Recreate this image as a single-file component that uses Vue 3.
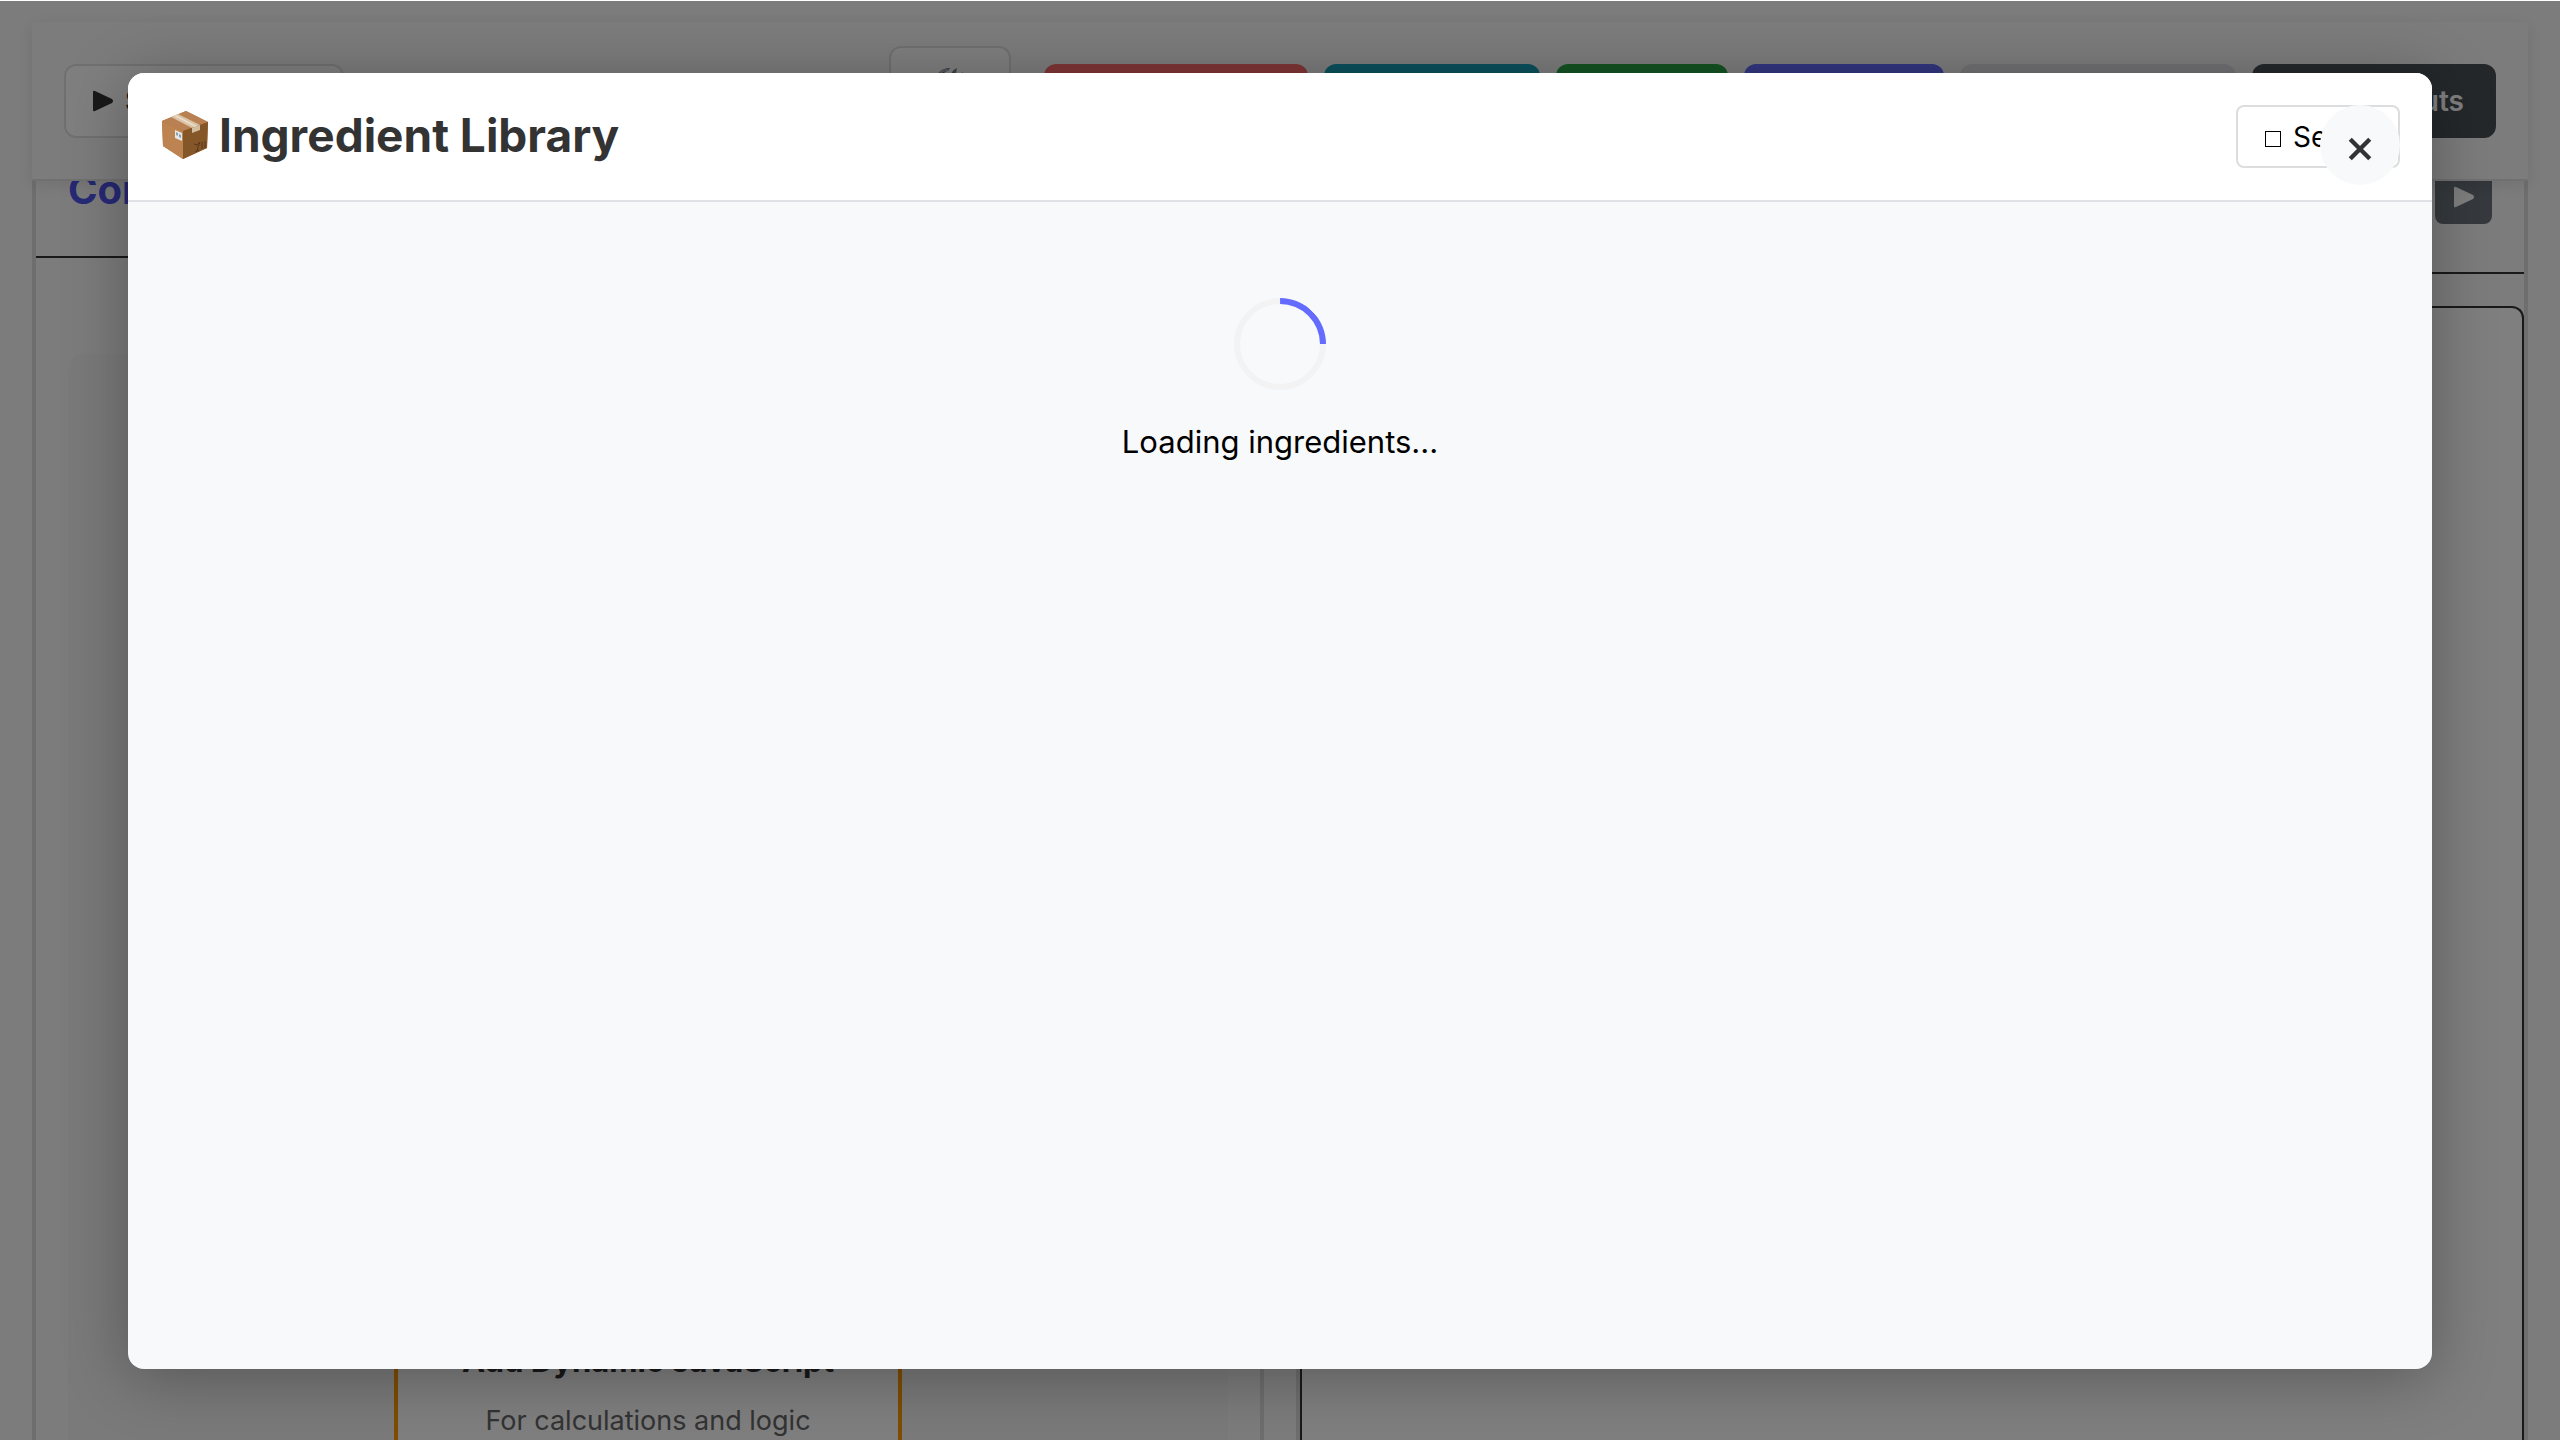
<script setup>
import { ref } from 'vue'

const open = ref(true)
const actions = [
  { name: 'Clear', tone: 'red' },
  { name: 'Import', tone: 'teal' },
  { name: 'Save', tone: 'green' },
  { name: 'Library', tone: 'indigo' },
  { name: 'Options', tone: 'pale' }
]
</script>

<template>
  <div class="page">
    <header class="toolbar">
      <button class="start" type="button">
        <svg class="tri" viewBox="0 0 20 20" aria-hidden="true"><path d="M0 1Q0 -1 2 0L19 8Q21 10 19 12L2 20Q0 21 0 19Z" /></svg>
        <span>Start</span>
      </button>
      <div class="actions">
        <button class="tool" type="button" aria-label="Tools">
          <svg viewBox="0 0 28 28" aria-hidden="true">
            <path d="M1 7Q5 0 14 0L12 3Q8 3 8 7L24 25L21 27L5 9Z" fill="#656c74" />
            <path d="M4 5Q7 2 12 2" fill="none" stroke="#a9b6c6" stroke-width="2" />
            <path d="M15 7Q16 2 21 0L20 5L23 7L27 4Q27 9 22 11L8 27L4 24Z" fill="#78828b" />
          </svg>
        </button>
        <button v-for="a in actions" :key="a.name" class="action" :class="a.tone" type="button" :aria-label="a.name"></button>
        <button class="action dark" type="button">Shortcuts</button>
      </div>
    </header>

    <main class="panels">
      <section class="panel editor">
        <h2 class="panel-title">Content</h2>
        <div class="canvas">
          <article class="card">
            <h3>Add Dynamic JavaScript</h3>
            <p>For calculations and logic</p>
          </article>
        </div>
      </section>
      <section class="panel preview">
        <div class="preview-bar">
          <button class="play" type="button" aria-label="Play">
            <svg class="tri" viewBox="0 0 20 20" aria-hidden="true"><path d="M0 1Q0 -1 2 0L19 8Q21 10 19 12L2 20Q0 21 0 19Z" /></svg>
          </button>
        </div>
        <div class="preview-box"></div>
      </section>
    </main>

    <div v-if="open" class="overlay">
      <div class="modal" role="dialog" aria-labelledby="library-title">
        <div class="modal-head">
          <h1 id="library-title">
            <svg class="box" viewBox="0 0 48 50" aria-hidden="true">
              <path d="M1 11L25 1L47 12L46 38L22 49L2 36Z" fill="#a9713f" />
              <path d="M1 11L25 1L47 12L22 21Z" fill="#b98152" />
              <path d="M1 11L22 21L22 49L2 36Z" fill="#bd8350" />
              <path d="M22 21L47 12L46 38L22 49Z" fill="#855628" />
              <path d="M10 7L17 4L39 15L31 18Z" fill="#d9c2a6" />
              <path d="M13 6L15 5L36 16L34 17Z" fill="#ebdcc8" />
              <path d="M31 18L39 15L39 20L31 23Z" fill="#d3bd9f" />
              <path d="M14 20L21 23L21 31L14 28Z" fill="#e4e8ea" />
              <path d="M15 22L17 23V26L15 25ZM18 24L20 25V28L18 27Z" fill="#8da0ad" />
              <path d="M33 34L36 35L39 32L37 37L36 41M34 42L38 40M41 32L41 39M44 31L44 38" fill="none" stroke="#57371b" stroke-width="1" />
            </svg>
            <span>Ingredient Library</span>
          </h1>
          <button class="select" type="button"><i class="square"></i>Select</button>
          <button class="close" type="button" aria-label="Close" @click="open = false">
            <svg viewBox="0 0 24 24" aria-hidden="true"><path d="M3 3L21 21M21 3L3 21" /></svg>
          </button>
        </div>
        <div class="modal-body" role="status">
          <div class="spinner"></div>
          <p>Loading ingredients...</p>
        </div>
      </div>
    </div>
  </div>
</template>

<style>
body {
  margin: 0;
  background: #fff;
}
</style>

<style scoped>
* {
  box-sizing: border-box;
}

.page {
  height: 100vh;
  overflow: hidden;
  position: relative;
  display: flex;
  flex-direction: column;
  padding: 22px 32px 0;
  background: #f8f9f8;
  color: #333;
  font-family: Inter, "Noto Sans", sans-serif;
}

button {
  font: inherit;
  margin: 0;
  cursor: pointer;
}

h1, h2, h3, p {
  margin: 0;
}

.tri {
  width: 20px;
  height: 20px;
  overflow: visible;
  fill: currentColor;
}

.toolbar {
  position: relative;
  z-index: 1;
  flex: none;
  height: 159px;
  padding: 0 32px;
  display: flex;
  align-items: center;
  justify-content: space-between;
  background: #f9f9f9;
  border-bottom: 2px solid #e0e0e0;
  box-shadow: 0 4px 16px rgba(0, 0, 0, 0.1);
}

.start {
  width: 280px;
  height: 74px;
  padding: 0 27px;
  display: flex;
  align-items: center;
  gap: 12px;
  border: 2px solid #e0e0e0;
  border-radius: 12px;
  background: #fff;
  color: #333;
  font-size: 28px;
  font-weight: 600;
}

.actions {
  display: flex;
  align-items: center;
  gap: 16px;
}

.tool {
  width: 122px;
  height: 110px;
  margin-right: 17px;
  padding: 20px 0 0;
  display: flex;
  justify-content: center;
  border: 2px solid #e0e0e0;
  border-radius: 12px;
  background: #fff;
}

.tool svg {
  width: 28px;
  height: 28px;
}

.action {
  height: 74px;
  padding: 0 32px;
  border: 0;
  border-radius: 12px;
  color: #fff;
  font-size: 28px;
  font-weight: 600;
  text-align: right;
}

.red { width: 264px; background: #ff6b6b; }
.teal { width: 216px; background: #17a2b8; }
.green { width: 172px; background: #28a745; }
.indigo { width: 200px; background: #646cff; }
.pale { width: 276px; background: #e2e2e8; }
.dark { width: 244px; background: #495057; }

.panels {
  flex: 1;
  min-height: 0;
  margin-top: -24px;
  display: grid;
  grid-template-columns: 1fr 1fr;
  gap: 32px;
}

.panel {
  display: flex;
  flex-direction: column;
  border: 4px solid #ddd;
  border-bottom: 0;
  background: #f9f9f9;
  overflow: hidden;
}

.panel-title {
  height: 97px;
  padding: 5px 32px 0;
  border-bottom: 2px solid #333;
  color: #4f54ee;
  font-size: 40px;
  line-height: 48px;
  font-weight: 700;
}

.canvas {
  flex: 1;
  min-height: 0;
  margin: 96px 32px 0;
  display: flex;
  align-items: flex-end;
  justify-content: center;
  border-radius: 16px 16px 0 0;
  background: #f5f5f5;
}

.card {
  width: 508px;
  height: 240px;
  padding-top: 137px;
  border: 4px solid #ff9800;
  border-width: 0 4px;
  background: #fff;
  text-align: center;
}

.card h3 {
  font-size: 31px;
  line-height: 48px;
  font-weight: 700;
}

.card p {
  margin-top: 16px;
  color: #666;
  font-size: 27px;
  line-height: 40px;
}

.preview-bar {
  height: 113px;
  padding: 0 32px 48px;
  display: flex;
  align-items: flex-end;
  justify-content: flex-end;
  border-bottom: 2px solid #333;
}

.play {
  width: 57px;
  height: 57px;
  display: flex;
  align-items: center;
  justify-content: center;
  padding: 3px 0 0;
  border: 0;
  border-radius: 8px;
  background: #6c757d;
  color: #fff;
}

.preview-box {
  flex: 1;
  margin-top: 32px;
  border: 2px solid #333;
  border-bottom: 0;
  border-radius: 12px 12px 0 0;
  background: #fff;
}

.overlay {
  position: absolute;
  z-index: 2;
  inset: 1px 0 -1px;
  display: flex;
  align-items: center;
  justify-content: center;
  background: rgba(0, 0, 0, 0.5);
  box-shadow: 0 -1px #fff;
}

.modal {
  width: 90%;
  height: 90%;
  display: flex;
  flex-direction: column;
  overflow: hidden;
  border-radius: 16px;
  background: #f8f9fb;
  box-shadow: 0 8px 64px rgba(0, 0, 0, 0.3);
}

.modal-head {
  position: relative;
  display: flex;
  align-items: center;
  justify-content: space-between;
  padding: 32px;
  border-bottom: 2px solid #dee2e6;
  background: #fff;
}

h1 {
  display: flex;
  align-items: center;
  gap: 10px;
  padding: 0 0 3px 1px;
  font-size: 46px;
  line-height: 56px;
  font-weight: 700;
}

.box {
  width: 48px;
  height: 50px;
}

.select {
  width: 164px;
  height: 63px;
  padding: 0 0 0 27px;
  display: flex;
  align-items: center;
  gap: 12px;
  border: 2px solid #ddd;
  border-radius: 8px;
  background: #fff;
  color: #000;
  font-size: 28px;
}

.square {
  width: 16px;
  height: 16px;
  margin-top: 4px;
  border: 1px solid #000;
}

.close {
  position: absolute;
  top: 32px;
  right: 32px;
  width: 80px;
  height: 80px;
  padding: 8px 0 0;
  display: flex;
  align-items: center;
  justify-content: center;
  border: 0;
  border-radius: 50%;
  background: #f8f9fa;
}

.close svg {
  width: 26px;
  height: 26px;
  fill: none;
  stroke: #333;
  stroke-width: 4;
}

.modal-body {
  flex: 1;
  display: flex;
  flex-direction: column;
  align-items: center;
  gap: 32px;
  padding: 96px 32px;
  color: #000;
  font-size: 31px;
  line-height: 40px;
}

.spinner {
  width: 92px;
  height: 92px;
  border: 6px solid #f3f3f3;
  border-top-color: #646cff;
  border-radius: 50%;
  transform: rotate(45deg);
}
</style>
